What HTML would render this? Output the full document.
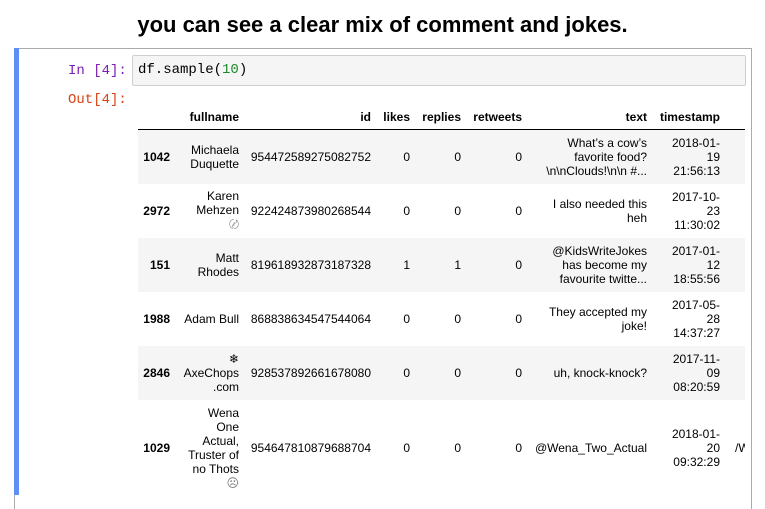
<!DOCTYPE html>
<html><head><meta charset="utf-8"><style>
body{margin:0;width:765px;height:495px;overflow:hidden;background:#fff;font-family:"Liberation Sans","DejaVu Sans",sans-serif;position:relative}
h1{position:absolute;top:10px;left:0;width:765px;text-align:center;margin:0;font-size:22px;font-weight:bold;color:#000;line-height:30px}
.cell{position:absolute;left:14px;top:48px;width:736px;height:460px;border:1px solid #ababab;border-bottom:none}
.bar{position:absolute;left:14px;top:48px;width:5px;height:447px;background:#5f8ff5}
.pr{position:absolute;font-family:"Liberation Mono",monospace;font-size:14px;line-height:16px}
.in{position:absolute;left:132px;top:55px;width:612px;height:29px;background:#f5f5f5;border:1px solid #cfcfcf;border-radius:2px}
.code{position:absolute;left:138px;top:62px;font-family:"Liberation Mono",monospace;font-size:14px;line-height:16px;color:#000}
.tw{position:absolute;left:138px;top:96px;width:607px;height:399px;overflow:hidden}
.row{position:absolute;left:0;width:607px;font-size:12px;color:#000}
.row div{position:absolute;text-align:right;line-height:14px;top:50%;transform:translateY(-50%);white-space:nowrap}
.s{background:#f5f5f5}
.h div{font-weight:bold}
</style></head><body>
<h1>you can see a clear mix of comment and jokes.</h1>
<div class="cell"></div><div class="bar"></div>
<div class="pr" style="left:68px;top:63px;color:#7d1fb3">In [4]:</div>
<div class="pr" style="left:68px;top:92px;color:#d84315">Out[4]:</div>
<div class="in"></div>
<div class="code">df.sample(<span style="color:#1b8a2a">10</span>)</div>
<div class="tw">
<div class="row h" style="top:8px;height:25px;border-bottom:1px solid #000">
<div style="right:506px">fullname</div><div style="right:374px">id</div><div style="right:335px">likes</div><div style="right:284px">replies</div><div style="right:223px">retweets</div><div style="right:98px">text</div><div style="right:25px">timestamp</div></div>
<div class="row s" style="top:34px;height:54px">
<div style="right:575px;font-weight:bold">1042</div><div style="right:506px">Michaela<br>Duquette</div><div style="right:374px">954472589275082752</div><div style="right:335px">0</div><div style="right:284px">0</div><div style="right:223px">0</div><div style="right:98px">What’s a cow’s<br>favorite food?<br>\n\nClouds!\n\n #...</div><div style="right:25px">2018-01-<br>19<br>21:56:13</div></div>
<div class="row" style="top:88px;height:54px">
<div style="right:575px;font-weight:bold">2972</div><div style="right:506px">Karen<br>Mehzen<br><span style="font-size:10px;color:#777">〄</span></div><div style="right:374px">922424873980268544</div><div style="right:335px">0</div><div style="right:284px">0</div><div style="right:223px">0</div><div style="right:98px">I also needed this<br>heh</div><div style="right:25px">2017-10-<br>23<br>11:30:02</div></div>
<div class="row s" style="top:142px;height:54px">
<div style="right:575px;font-weight:bold">151</div><div style="right:506px">Matt<br>Rhodes</div><div style="right:374px">819618932873187328</div><div style="right:335px">1</div><div style="right:284px">1</div><div style="right:223px">0</div><div style="right:98px">@KidsWriteJokes<br>has become my<br>favourite twitte...</div><div style="right:25px">2017-01-<br>12<br>18:55:56</div></div>
<div class="row" style="top:196px;height:54px">
<div style="right:575px;font-weight:bold">1988</div><div style="right:506px">Adam Bull</div><div style="right:374px">868838634547544064</div><div style="right:335px">0</div><div style="right:284px">0</div><div style="right:223px">0</div><div style="right:98px">They accepted my<br>joke!</div><div style="right:25px">2017-05-<br>28<br>14:37:27</div></div>
<div class="row s" style="top:250px;height:54px">
<div style="right:575px;font-weight:bold">2846</div><div style="right:506px">❄<br>AxeChops<br>.com</div><div style="right:374px">928537892661678080</div><div style="right:335px">0</div><div style="right:284px">0</div><div style="right:223px">0</div><div style="right:98px">uh, knock-knock?</div><div style="right:25px">2017-11-<br>09<br>08:20:59</div></div>
<div class="row" style="top:304px;height:96px">
<div style="right:575px;font-weight:bold">1029</div><div style="right:506px">Wena<br>One<br>Actual,<br>Truster of<br>no Thots<br><span style="color:#777">☹</span></div><div style="right:374px">954647810879688704</div><div style="right:335px">0</div><div style="right:284px">0</div><div style="right:223px">0</div><div style="right:98px">@Wena_Two_Actual</div><div style="right:25px">2018-01-<br>20<br>09:32:29</div><div style="left:597px;text-align:left">/W</div></div>
</div>
</body></html>
